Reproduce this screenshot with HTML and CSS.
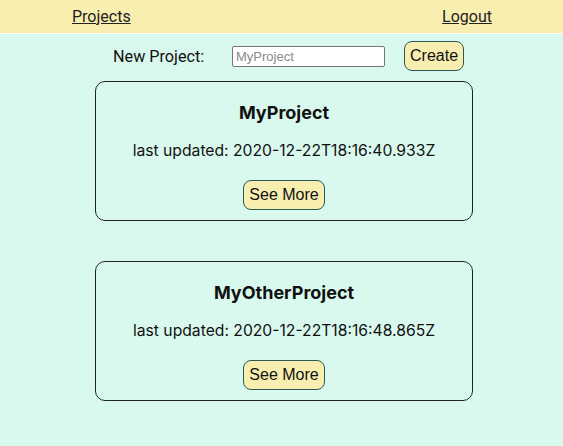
FILE: index.html
```html
<!DOCTYPE html>
<html>
<head>
<meta charset="utf-8">
<link rel="stylesheet" href="styles.css">
</head>
<body>
<header class="nav">
  <a class="nav-link" href="#">Projects</a>
  <a class="nav-link" href="#">Logout</a>
</header>
<main class="main">
  <form class="new-row">
    <label class="new-label">New Project:</label>
    <input class="new-input" type="text" placeholder="MyProject">
    <button class="btn create" type="button">Create</button>
  </form>
  <div class="cards">
    <section class="card">
      <h2 class="card-title">MyProject</h2>
      <p class="card-date">last updated: 2020-12-22T18:16:40.933Z</p>
      <button class="btn more" type="button">See More</button>
    </section>
    <section class="card">
      <h2 class="card-title">MyOtherProject</h2>
      <p class="card-date">last updated: 2020-12-22T18:16:48.865Z</p>
      <button class="btn more" type="button">See More</button>
    </section>
  </div>
</main>
</body>
</html>
```
FILE: styles.css
```css
html, body {
  margin: 0;
  padding: 0;
  background: #d9f9ee;
  font-family: Inter, "Liberation Sans", sans-serif;
  color: #111;
}
.nav {
  height: 33px;
  background: #f8eeb0;
  border-bottom: 1px solid #ffffff;
  display: flex;
  justify-content: space-between;
  align-items: center;
  padding: 0 71px 0 72px;
  box-sizing: content-box;
}
.nav-link {
  font-family: Roboto, sans-serif;
  font-size: 16px;
  color: #222;
  text-decoration: underline;
}
.main {
  padding-top: 7px;
}
.new-row {
  display: flex;
  align-items: center;
  margin: 0 0 0 113px;
  height: 30px;
}
.new-label {
  font-family: Roboto, sans-serif;
  font-size: 16.2px;
  width: 119px;
}
.new-input {
  width: 153px;
  height: 21px;
  box-sizing: border-box;
  border: 1px solid #767676;
  border-radius: 2px;
  padding: 0 3px;
  font-family: "Liberation Sans", Arial, sans-serif;
  font-size: 13px;
  margin-right: 19px;
}
.new-input::placeholder {
  color: #8a8a8a;
}
.btn {
  font-family: "Liberation Sans", Arial, sans-serif;
  font-size: 16px;
  background: #f8eeb0;
  border: 1px solid #2d5a57;
  border-radius: 8px;
  color: #111;
  padding: 0 5px;
  height: 30px;
  white-space: nowrap;
}
.create {
  width: 60px;
}
.cards {
  display: flex;
  flex-direction: column;
  gap: 40px;
  margin: 10px 0 0 95px;
  width: 378px;
}
.card {
  border: 1px solid #222;
  border-radius: 10px;
  display: flex;
  flex-direction: column;
  align-items: center;
  box-sizing: border-box;
  height: 140px;
}
.card-title {
  font-size: 18px;
  font-weight: 700;
  margin: 20px 0 0;
  line-height: 22px;
}
.card-date {
  font-size: 15.7px;
  margin: 17px 0 0;
  line-height: 20px;
}
.more {
  margin-top: 19px;
  width: 82px;
}
```
